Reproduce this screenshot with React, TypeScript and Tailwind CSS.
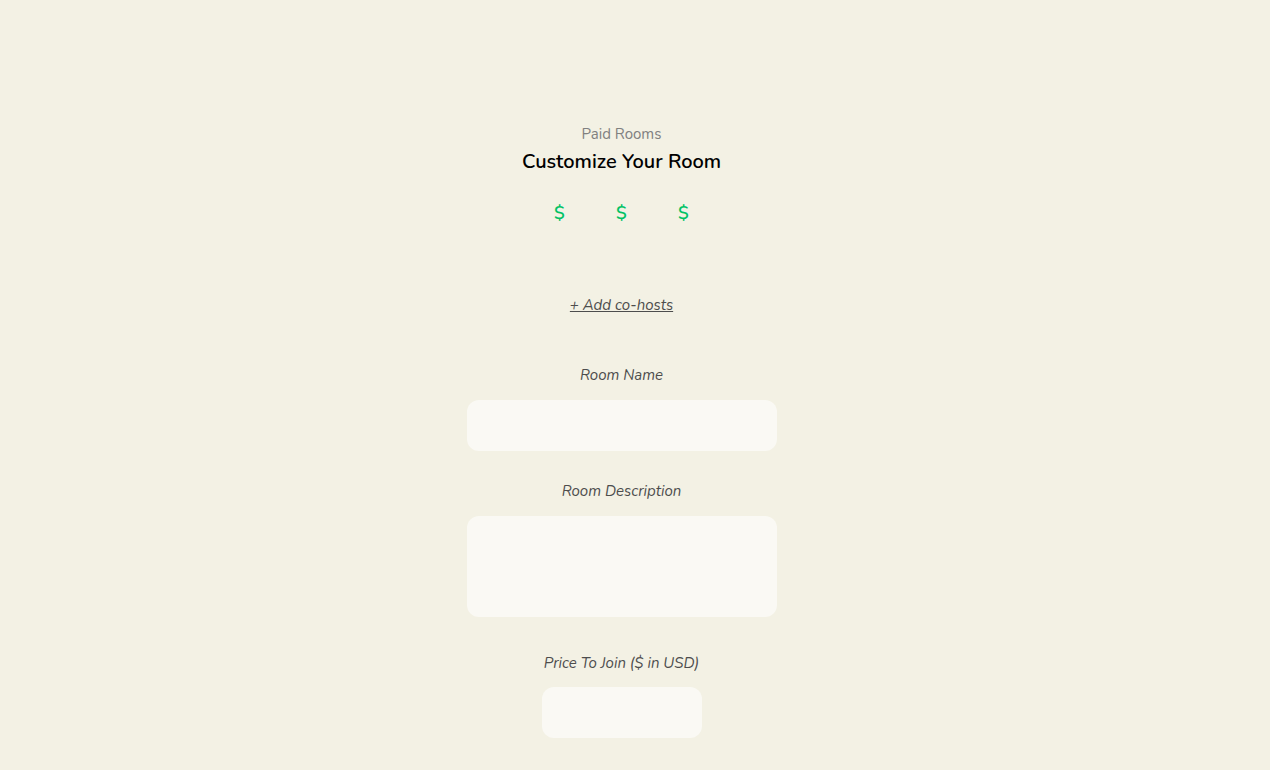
const fieldClass =
  "rounded-[12px] bg-[#faf9f4] px-4 text-center text-[15px] text-[#4d4d4d] outline-none focus:ring-1 focus:ring-[#00c265]";

const labelClass = "text-[15px] leading-5 italic text-[#4d4d4d]";

export default function App() {
  return (
    <main className="min-h-screen bg-[#f3f1e4] pt-[124px] pr-[27px] pb-8 font-['Nunito','Lato',sans-serif]">
      <form
        className="mx-auto flex w-full max-w-[310px] flex-col items-center"
        onSubmit={(e) => e.preventDefault()}
      >
        <p className="text-[15px] leading-5 text-[#808080]">Paid Rooms</p>
        <h1 className="mt-1 text-xl leading-7 font-semibold text-black">Customize Your Room</h1>

        <div className="mt-[25px] flex gap-[50px] text-lg leading-6 font-semibold text-[#00c265]">
          {[1, 2, 3].map((n) => (
            <span key={n} className="w-3 text-center">$</span>
          ))}
        </div>

        <button type="button" className="mt-[70px] text-[15px] leading-5 text-[#4d4d4d] italic underline">
          + Add co-hosts
        </button>

        <label htmlFor="name" className={`mt-[50px] ${labelClass}`}>Room Name</label>
        <input id="name" type="text" className={`mt-[15px] h-[51px] w-full ${fieldClass}`} />

        <label htmlFor="description" className={`mt-[30px] ${labelClass}`}>Room Description</label>
        <textarea id="description" className={`mt-[15px] h-[101px] w-full resize-none py-3 ${fieldClass}`} />

        <label htmlFor="price" className={`mt-9 ${labelClass}`}>Price To Join ($ in USD)</label>
        <input id="price" type="text" inputMode="decimal" className={`mt-[14px] h-[51px] w-40 ${fieldClass}`} />
      </form>
    </main>
  );
}
